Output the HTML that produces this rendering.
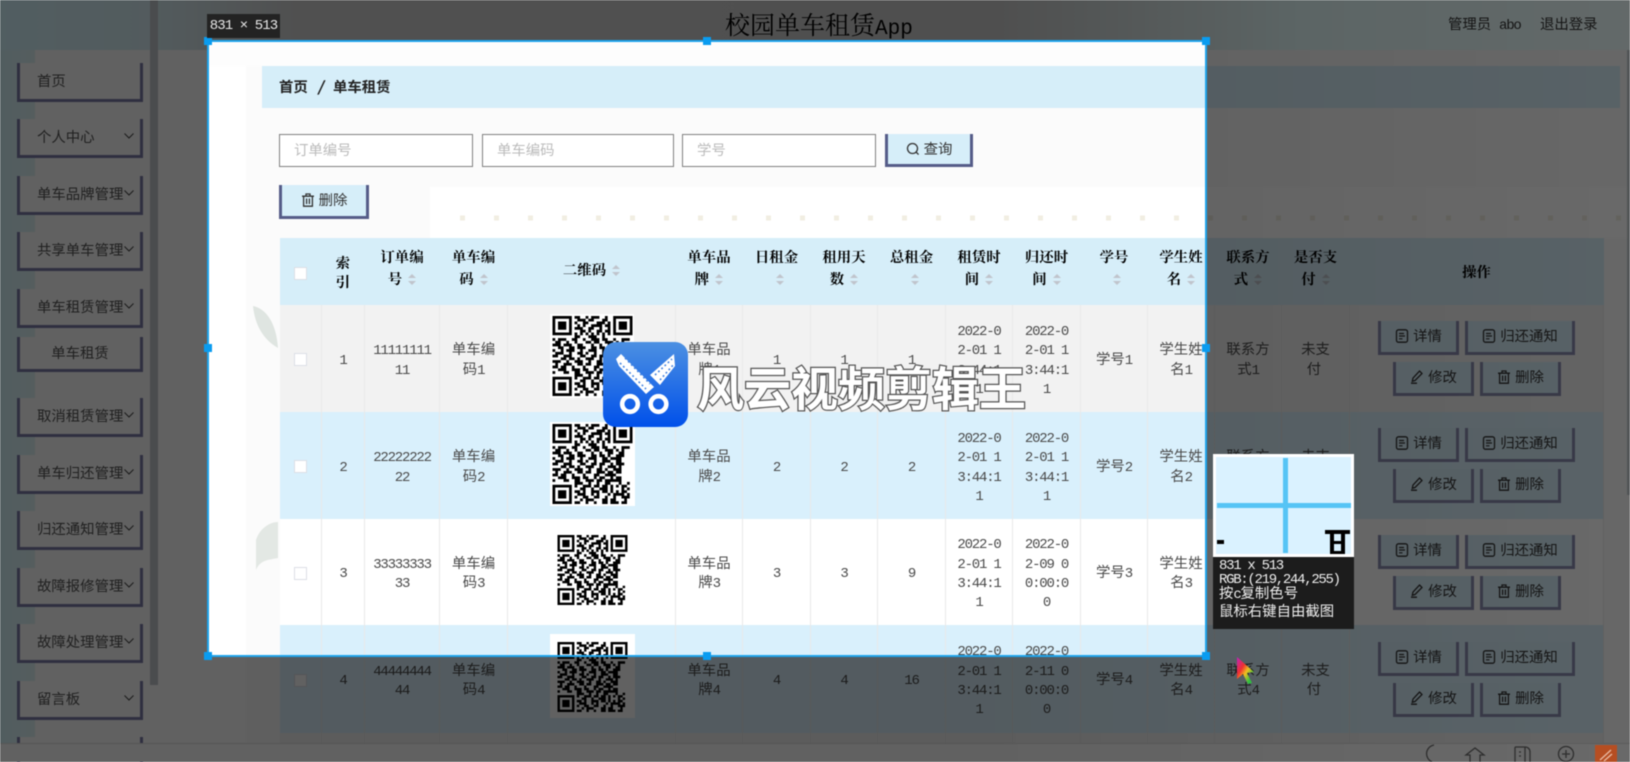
<!DOCTYPE html>
<html lang="zh"><head><meta charset="utf-8"><title>校园单车租赁App</title>
<style>
*{box-sizing:border-box}
html,body{margin:0;padding:0;width:1630px;height:762px;overflow:hidden;background:#fff}
body{position:relative;font:14.4px/19.3px "Noto Sans CJK SC","Liberation Sans",sans-serif;color:#4a4a4a;filter:blur(.45px)}
i{font:14px/12px "Liberation Mono",monospace;font-style:normal;letter-spacing:-1.2px}
.a{position:absolute}
#bg{left:0;top:0;width:1630px;height:762px;background:#fff}
#ctn{left:246px;top:50px;width:1384px;height:693px;background:#fbfbfb}
#ctn2{left:430px;top:187px;width:1200px;height:51px;background:#fff}
#top{left:0;top:0;width:1630px;height:50px;background:linear-gradient(90deg,#d6f6ff 0,#d9f0f6 150px,#d2d2d2 300px,#d0d0d0 1000px,#e8ffff 1300px,#f0ffff 100%)}
#strip{left:0;top:50px;width:35px;height:693px;background:linear-gradient(90deg,#d5f4fb,#e0f4f8)}
#sb{left:150px;top:0;width:8px;height:685px;background:#c2c8cc}
.t1{left:725px;top:8px;font:25px/32px "Noto Serif CJK SC",serif;color:#000;white-space:nowrap}
.t1 span{font:21px/32px "Liberation Mono",monospace}
.n{font-size:14.4px;line-height:20px;white-space:nowrap;color:#333}
.m{display:block;position:absolute;left:17px;width:126px;height:39px;border:3px solid #7c7ca8;border-top:0;background:#fff;color:#555;padding:8px 0 0 17px;line-height:20px;white-space:nowrap}
.m svg{position:absolute;left:104px;top:14px}
#bc{left:262px;top:66px;width:1358px;height:42px;background:#d6eef9;font-weight:700;color:#222;line-height:42px;padding-left:17px;white-space:pre}
.inp{height:33px;top:134px;border:1.5px solid #7f7f7f;background:#fff;color:#bbb;padding-left:14px;line-height:30px}
.btn{height:34px;border:3px solid #555c88;border-top:0;background:#d6eef9;color:#333;text-align:center;line-height:30px;white-space:nowrap}
.btn svg{vertical-align:-2px;margin-right:4px}
.o{border-color:#8a8caf;width:81px}
.w{width:110px}
.l1{left:1378px}.l2{left:1465px}.l3{left:1393px}.l4{left:1480px}
table{position:absolute;left:280px;top:238px;width:1324px;border-collapse:separate;border-spacing:0;table-layout:fixed}
td,th{padding:0;text-align:center;vertical-align:middle;border-right:1px solid #e9e9e9;white-space:nowrap;overflow:hidden}
th{font:700 14.4px/21.5px "Noto Serif CJK SC","Noto Sans CJK SC",serif;color:#000;border-right-color:#d6eef9;padding-bottom:8px}
th.x{padding-bottom:0}
th.y{padding-bottom:4px}
.h{background:#d6eef9;height:67px}
.g{background:#f2f2f2}.c{background:#d9f0fc}.f{background:#fff}
s{display:inline-block;width:8px;height:13px;margin-left:6px;vertical-align:-2px;position:relative;text-decoration:none}
s:before,s:after{content:"";position:absolute;left:0;border:4px solid transparent}
s:before{top:-3px;border-bottom:4px solid #c0c4cc}
s:after{bottom:-3px;border-top:4px solid #c0c4cc}
.k{display:inline-block;width:13px;height:13px;background:#fff;border:1px solid #dcdfe6;vertical-align:middle}
.q{position:absolute;background:#fff}
#ov{left:0;top:0;width:1630px;height:762px;background:linear-gradient(90deg,rgba(0,0,0,.62),rgba(0,0,0,.62) 60%,rgba(0,0,0,.59));clip-path:path(evenodd,"M0 0H1630V762H0Z M208 41H1206V656H208Z")}
#sel{left:207px;top:40px;width:1000px;height:617px;border:2px solid #1ea4ec}
.hd{position:absolute;width:8px;height:8px;background:#0a9cf0}
#lbl{left:207px;top:14px;width:73px;height:24px;background:#232323;color:#e8e8e8;font:14px/24px "Liberation Mono",monospace;text-align:center;white-space:pre;letter-spacing:-.9px}
#wm{left:697px;top:358px;font:700 47px/56px "Noto Sans CJK SC",sans-serif;color:#fff;white-space:nowrap;-webkit-text-stroke:2.5px #555;paint-order:stroke fill}
#mg{left:1213px;top:454px;width:141px;height:175px;background:#1c1c1c;color:#eee}
#mg div{position:absolute;left:6px;white-space:nowrap;line-height:18px}
#mg i{font-size:14px;line-height:12px;letter-spacing:-1.3px}
</style></head><body>
<svg width="0" height="0" style="position:absolute"><defs>
<symbol id="qr" viewBox="0 0 29 29"><path fill="#000" fill-rule="evenodd" d="M0 0h7v7H0zM1 1v5h5V1zM2 2h3v3H2zM22 0h7v7h-7zM23 1v5h5V1zM24 2h3v3h-3zM0 22h7v7H0zM1 23v5h5v-5zM2 24h3v3H2z"/><path stroke="#000" fill="none" d="M8 .5h2m2 0h1m1 0h3m2 0h1M9 1.5h3m1 0h2m3 0h2M8 2.5h1m2 0h2m3 0h3m1 0h1M9 3.5h1m1 0h1m2 0h4m1 0h2M8 4.5h3m2 0h2m2 0h1m2 0h1M10 5.5h2m1 0h1m2 0h2m1 0h2M8 6.5h1m1 0h1m1 0h1m1 0h1m1 0h1m1 0h1m1 0h1M8 7.5h2m3 0h3m2 0h1M0 8.5h1m1 0h3m2 0h2m2 0h1m2 0h3m1 0h2m2 0h1m2 0h3M1 9.5h2m2 0h1m2 0h1m3 0h2m1 0h2m2 0h3m1 0h1m1 0h1M0 10.5h3m1 0h3m2 0h2m3 0h1m2 0h1m2 0h2m2 0h2M2 11.5h2m2 0h2m1 0h3m2 0h2m1 0h2m1 0h1m2 0h3M0 12.5h1m2 0h1m1 0h3m2 0h1m2 0h3m2 0h2m1 0h4M1 13.5h3m2 0h1m2 0h2m1 0h1m2 0h1m2 0h3m2 0h2M0 14.5h2m2 0h3m3 0h2m2 0h2m1 0h2m2 0h1m1 0h3M3 15.5h2m1 0h2m1 0h1m2 0h3m2 0h1m2 0h3m1 0h1M0 16.5h3m2 0h1m2 0h3m2 0h1m2 0h2m1 0h1m2 0h3M1 17.5h1m2 0h3m2 0h2m1 0h2m2 0h3m1 0h2m1 0h2M0 18.5h2m1 0h2m2 0h1m3 0h1m3 0h2m2 0h4M2 19.5h3m2 0h3m1 0h2m2 0h1m1 0h2m2 0h1m1 0h2M0 20.5h1m3 0h2m2 0h2m2 0h3m1 0h2m1 0h6M8 21.5h3m2 0h1m2 0h1m2 0h2m3 0h1m2 0h1M8 22.5h1m2 0h3m1 0h2m1 0h2m1 0h1m1 0h1m1 0h2M10 23.5h2m2 0h1m2 0h3m1 0h1m3 0h1m1 0h1M8 24.5h2m1 0h1m2 0h3m1 0h2m1 0h1m1 0h1m1 0h2M9 25.5h3m2 0h1m1 0h1m3 0h1m1 0h4m1 0h1M8 26.5h1m2 0h2m2 0h2m2 0h1m2 0h1m2 0h3M10 27.5h1m1 0h3m3 0h2m1 0h2m3 0h1M8 28.5h2m2 0h1m2 0h1m2 0h2m1 0h3m1 0h2"/></symbol>
<symbol id="doc" viewBox="0 0 14 14"><rect x="1.5" y=".8" width="11" height="12.4" rx="2" fill="none" stroke="currentColor" stroke-width="1.3"/><path d="M4 4.5h5M4 7h6M4 9.8h3.5" stroke="currentColor" stroke-width="1.2" fill="none"/></symbol>
<symbol id="tr" viewBox="0 0 14 14"><path d="M1 3.2h12M5 3V1h4v2M2.6 3.2v10h8.8v-10M5.6 5.5v5.5M8.4 5.5v5.5" fill="none" stroke="currentColor" stroke-width="1.3"/></symbol>
<symbol id="ed" viewBox="0 0 14 14"><path d="M9.5 1 12 3.5 5 10.5 2.3 11.3 3 8zM1 13.2h6" fill="none" stroke="currentColor" stroke-width="1.3"/></symbol>
<symbol id="se" viewBox="0 0 14 14"><circle cx="6.5" cy="6.5" r="5" fill="none" stroke="currentColor" stroke-width="1.3"/><path d="M10 10l2.6 2.6" stroke="currentColor" stroke-width="1.3"/></symbol>
<symbol id="ch" viewBox="0 0 10 6"><path d="M.5.5 5 5 9.5.5" fill="none" stroke="#444" stroke-width="1"/></symbol>
</defs></svg>

<div class="a" id="bg"></div>
<div class="a" id="ctn"></div>
<div class="a" id="ctn2"></div>
<div class="a" style="left:208px;top:41px;width:38px;height:700px;background:#fff"></div>
<svg class="a" style="left:250px;top:290px" width="30" height="320"><path d="M3 16C14 18 26 30 28 58 14 50 5 36 3 16Z" fill="#dfe5e1"/><path d="M6 250C10 238 20 232 28 232V268C18 270 10 270 6 280Z" fill="#e3e8e4"/></svg>
<svg class="a" style="left:460px;top:214px" width="1170" height="8"><line x1="0" y1="4" x2="1170" y2="4" stroke="#f1eee2" stroke-width="5" stroke-dasharray="5 29"/></svg>

<div class="a" id="top"></div>
<div class="a" style="left:208px;top:41px;width:998px;height:25px;background:#fdfdfd"></div>
<div class="a" id="strip"></div>
<div class="a" id="sb"></div>
<div class="a t1">校园单车租赁<span>App</span></div>
<div class="a n" style="left:1448px;top:14px">管理员</div>
<div class="a n" style="left:1499px;top:14px"><i>abo</i></div>
<div class="a n" style="left:1540px;top:14px">退出登录</div>

<div class="m" style="top:63px">首页</div>
<div class="m" style="top:119px">个人中心<svg width="10" height="6"><use href="#ch"/></svg></div>
<div class="m" style="top:176px">单车品牌管理<svg width="10" height="6"><use href="#ch"/></svg></div>
<div class="m" style="top:232px">共享单车管理<svg width="10" height="6"><use href="#ch"/></svg></div>
<div class="m" style="top:289px">单车租赁管理<svg width="10" height="6"><use href="#ch"/></svg></div>
<div class="m" style="top:337px;height:35px;padding:6px 0 0;text-align:center">单车租赁</div>
<div class="m" style="top:398px">取消租赁管理<svg width="10" height="6"><use href="#ch"/></svg></div>
<div class="m" style="top:455px">单车归还管理<svg width="10" height="6"><use href="#ch"/></svg></div>
<div class="m" style="top:511px">归还通知管理<svg width="10" height="6"><use href="#ch"/></svg></div>
<div class="m" style="top:568px">故障报修管理<svg width="10" height="6"><use href="#ch"/></svg></div>
<div class="m" style="top:624px">故障处理管理<svg width="10" height="6"><use href="#ch"/></svg></div>
<div class="m" style="top:681px">留言板<svg width="10" height="6"><use href="#ch"/></svg></div>
<div class="m" style="top:737px"></div>

<div class="a" id="bc">首页   <b style="font-style:italic">/</b>   单车租赁</div>
<div class="a inp" style="left:279px;width:194px">订单编号</div>
<div class="a inp" style="left:482px;width:192px">单车编码</div>
<div class="a inp" style="left:682px;width:194px">学号</div>
<div class="a btn" style="left:885px;top:134px;width:88px;height:33px"><svg width="14" height="14"><use href="#se"/></svg>查询</div>
<div class="a btn" style="left:279px;top:185px;width:90px"><svg width="14" height="14"><use href="#tr"/></svg>删除</div>

<table>
<colgroup><col style="width:42px"><col style="width:43px"><col style="width:75px"><col style="width:68px"><col style="width:168px"><col style="width:67px"><col style="width:68px"><col style="width:67px"><col style="width:68px"><col style="width:67px"><col style="width:68px"><col style="width:67px"><col style="width:67px"><col style="width:67px"><col style="width:68px"><col style="width:254px"></colgroup>
<tr class="h"><th class="x"><span class="k"></span></th><th class="x" style="line-height:19px">索<br>引</th><th>订单编<br>号<s></s></th><th>单车编<br>码<s></s></th><th class="y">二维码<s></s></th><th>单车品<br>牌<s></s></th><th>日租金<br><s></s></th><th>租用天<br>数<s></s></th><th>总租金<br><s></s></th><th>租赁时<br>间<s></s></th><th>归还时<br>间<s></s></th><th>学号<br><s></s></th><th>学生姓<br>名<s></s></th><th>联系方<br>式<s></s></th><th>是否支<br>付<s></s></th><th class="x">操作</th></tr>
<tr class="g" style="height:107px"><td><span class="k"></span></td><td><i>1</i></td><td><i>11111111<br>11</i></td><td>单车编<br>码<i>1</i></td><td></td><td>单车品<br>牌<i>1</i></td><td><i>1</i></td><td><i>1</i></td><td><i>1</i></td><td><i>2022-0<br>2-01 1<br>3:44:1<br>1</i></td><td><i>2022-0<br>2-01 1<br>3:44:1<br>1</i></td><td>学号<i>1</i></td><td>学生姓<br>名<i>1</i></td><td>联系方<br>式<i>1</i></td><td>未支<br>付&nbsp;</td><td></td></tr>
<tr class="c" style="height:107px"><td><span class="k"></span></td><td><i>2</i></td><td><i>22222222<br>22</i></td><td>单车编<br>码<i>2</i></td><td></td><td>单车品<br>牌<i>2</i></td><td><i>2</i></td><td><i>2</i></td><td><i>2</i></td><td><i>2022-0<br>2-01 1<br>3:44:1<br>1</i></td><td><i>2022-0<br>2-01 1<br>3:44:1<br>1</i></td><td>学号<i>2</i></td><td>学生姓<br>名<i>2</i></td><td>联系方<br>式<i>2</i></td><td>未支<br>付&nbsp;</td><td></td></tr>
<tr class="f" style="height:106px"><td><span class="k"></span></td><td><i>3</i></td><td><i>33333333<br>33</i></td><td>单车编<br>码<i>3</i></td><td></td><td>单车品<br>牌<i>3</i></td><td><i>3</i></td><td><i>3</i></td><td><i>9</i></td><td><i>2022-0<br>2-01 1<br>3:44:1<br>1</i></td><td><i>2022-0<br>2-09 0<br>0:00:0<br>0</i></td><td>学号<i>3</i></td><td>学生姓<br>名<i>3</i></td><td>联系方<br>式<i>3</i></td><td>未支<br>付&nbsp;</td><td></td></tr>
<tr class="c" style="height:108px"><td><span class="k"></span></td><td><i>4</i></td><td><i>44444444<br>44</i></td><td>单车编<br>码<i>4</i></td><td></td><td>单车品<br>牌<i>4</i></td><td><i>4</i></td><td><i>4</i></td><td><i>16</i></td><td><i>2022-0<br>2-01 1<br>3:44:1<br>1</i></td><td><i>2022-0<br>2-11 0<br>0:00:0<br>0</i></td><td>学号<i>4</i></td><td>学生姓<br>名<i>4</i></td><td>联系方<br>式<i>4</i></td><td>未支<br>付&nbsp;</td><td></td></tr>
<tr class="g"><td style="height:10px"></td><td></td><td></td><td></td><td></td><td></td><td></td><td></td><td></td><td></td><td></td><td></td><td></td><td></td><td></td><td></td></tr>
</table>

<div class="q" style="left:550px;top:314px;width:84px;height:84px;background:#fff"></div>
<svg class="a" style="left:552px;top:316px" width="81" height="80"><use href="#qr"/></svg>
<div class="q" style="left:550px;top:422px;width:85px;height:84px"></div>
<svg class="a" style="left:552px;top:424px" width="81" height="80"><use href="#qr"/></svg>
<svg class="a" style="left:557px;top:535px" width="71" height="70"><use href="#qr"/></svg>
<div class="q" style="left:550px;top:634px;width:85px;height:84px"></div>
<svg class="a" style="left:557px;top:642px" width="71" height="70"><use href="#qr"/></svg>

<div class="a btn o l1" style="top:321px"><svg width="14" height="14"><use href="#doc"/></svg>详情</div><div class="a btn o w l2" style="top:321px"><svg width="14" height="14"><use href="#doc"/></svg>归还通知</div><div class="a btn o l3" style="top:362px"><svg width="14" height="14"><use href="#ed"/></svg>修改</div><div class="a btn o l4" style="top:362px"><svg width="14" height="14"><use href="#tr"/></svg>删除</div>
<div class="a btn o l1" style="top:428px"><svg width="14" height="14"><use href="#doc"/></svg>详情</div><div class="a btn o w l2" style="top:428px"><svg width="14" height="14"><use href="#doc"/></svg>归还通知</div><div class="a btn o l3" style="top:469px"><svg width="14" height="14"><use href="#ed"/></svg>修改</div><div class="a btn o l4" style="top:469px"><svg width="14" height="14"><use href="#tr"/></svg>删除</div>
<div class="a btn o l1" style="top:535px"><svg width="14" height="14"><use href="#doc"/></svg>详情</div><div class="a btn o w l2" style="top:535px"><svg width="14" height="14"><use href="#doc"/></svg>归还通知</div><div class="a btn o l3" style="top:576px"><svg width="14" height="14"><use href="#ed"/></svg>修改</div><div class="a btn o l4" style="top:576px"><svg width="14" height="14"><use href="#tr"/></svg>删除</div>
<div class="a btn o l1" style="top:642px"><svg width="14" height="14"><use href="#doc"/></svg>详情</div><div class="a btn o w l2" style="top:642px"><svg width="14" height="14"><use href="#doc"/></svg>归还通知</div><div class="a btn o l3" style="top:683px"><svg width="14" height="14"><use href="#ed"/></svg>修改</div><div class="a btn o l4" style="top:683px"><svg width="14" height="14"><use href="#tr"/></svg>删除</div>

<div class="a" style="left:0;top:743px;width:1630px;height:19px;background:#fff;border-top:1px solid #e0e0e0"></div>
<div class="a" style="left:1627px;top:50px;width:3px;height:445px;background:#c8ced2"></div>

<div class="a" id="ov"></div>

<svg class="a" style="left:1415px;top:744px" width="180" height="18" fill="none" stroke="#2e2e2e" stroke-width="1.3"><path d="M19 1C10 3 9 14 17 18"/><path d="M55 18V11h-4l9-7 9 7h-4v7"/><path d="M100 3h10c3 0 5 2 5 5v10M100 3v15M110 3v15M104 8h2M104 12h2"/><circle cx="151" cy="10" r="7.5"/><path d="M147 10h8M151 6v8"/></svg>
<div class="a" style="left:1595px;top:745px;width:22px;height:17px;background:#b64e22"></div>
<svg class="a" style="left:1598px;top:747px" width="16" height="15" fill="none" stroke="#e8b8a0" stroke-width="1.4"><path d="M2 13 13 3M6 14 14 7"/></svg>

<div class="a" id="sel"></div>
<span class="hd" style="left:204px;top:37px"></span><span class="hd" style="left:703px;top:37px"></span><span class="hd" style="left:1202px;top:37px"></span>
<span class="hd" style="left:204px;top:344px"></span><span class="hd" style="left:1202px;top:344px"></span>
<span class="hd" style="left:204px;top:652px"></span><span class="hd" style="left:703px;top:652px"></span><span class="hd" style="left:1202px;top:652px"></span>
<div class="a" id="lbl">831 × 513</div>

<svg class="a" style="left:603px;top:342px" width="85" height="85" viewBox="0 0 85 85">
<defs><linearGradient id="lg" x1="0" y1="0" x2="0" y2="1"><stop offset="0" stop-color="#4c90e2"/><stop offset="1" stop-color="#0050ea"/></linearGradient></defs>
<rect width="85" height="85" rx="13" fill="url(#lg)"/>
<path d="M13 17 18 12 51 45 43 52 16 24Z" fill="#fff"/><path d="M71 12 72 24 57 43 47 33Z" fill="#fff"/>
<path d="M17 21 43 47M22 16 47 42M52 33 69 17M57 38 71 22" stroke="#3f80e0" stroke-width="1.6" stroke-dasharray="1.8 2.6" fill="none"/>
<circle cx="27" cy="62" r="7.8" fill="none" stroke="#fff" stroke-width="4.6"/><circle cx="55.5" cy="62" r="7.8" fill="none" stroke="#fff" stroke-width="4.6"/></svg>
<div class="a" id="wm">风云视频剪辑王</div>

<div class="a" id="mg">
<div style="left:0;top:0;width:141px;height:103px;background:#daf2ff;overflow:hidden;border:3px solid #fff">
<span class="a" style="left:67px;top:1px;width:5px;height:95px;background:#56c4f5"></span>
<span class="a" style="left:1px;top:46px;width:134px;height:5px;background:#56c4f5"></span>
<span class="a" style="left:1px;top:83px;width:7px;height:4px;background:#000"></span>
<span class="a" style="left:109px;top:73px;width:25px;height:4px;background:#000"></span>
<span class="a" style="left:114px;top:77px;width:4px;height:22px;background:#000"></span>
<span class="a" style="left:125px;top:77px;width:4px;height:22px;background:#000"></span>
<span class="a" style="left:118px;top:84px;width:8px;height:3px;background:#000"></span>
<span class="a" style="left:118px;top:94px;width:8px;height:5px;background:#000"></span>
</div>
<div style="top:101px"><i>831 x 513</i></div>
<div style="top:115px"><i>RGB:(219,244,255)</i></div>
<div style="top:130px">按<i>c</i>复制色号</div>
<div style="top:148px">鼠标右键自由截图</div>
</div>

<svg class="a" style="left:1236px;top:657px" width="20" height="28" viewBox="0 0 20 28"><defs><linearGradient id="cu" x1="0" y1="0" x2="1" y2="1"><stop offset="0" stop-color="#c020c0"/><stop offset=".35" stop-color="#f03030"/><stop offset=".55" stop-color="#f0c020"/><stop offset=".8" stop-color="#30c040"/></linearGradient></defs><path d="M1 0 18 15 11 16 16 26 12 27 7 17 1 22Z" fill="url(#cu)"/></svg>
</body></html>
